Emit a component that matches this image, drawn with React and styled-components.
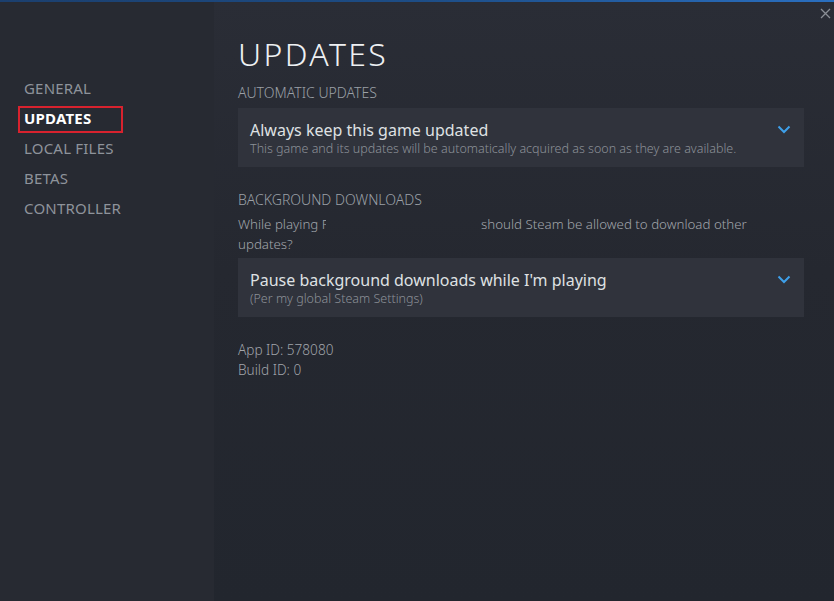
import React from "react";
import styled, { createGlobalStyle } from "styled-components";

const Global = createGlobalStyle`
  html, body { margin: 0; padding: 0; width: 834px; height: 601px; overflow: hidden; background: #23262e; }
  * { box-sizing: border-box; }
  #root { width: 834px; height: 601px; }
`;

const mainBg = `
  background: linear-gradient(180deg, #2a2d36 0%, #252830 45%, #22262e 100%);
  background-attachment: fixed;
`;

const Window = styled.div`
  position: relative;
  width: 834px;
  height: 601px;
  display: flex;
  flex-direction: column;
  font-family: "Noto Sans", "Open Sans", sans-serif;
`;

const TopLine = styled.div`
  height: 2px;
  flex: none;
  background: linear-gradient(90deg, #1b3f6e 0%, #1d4d86 50%, #2a6fc0 100%);
`;

const Body = styled.div`
  flex: 1;
  display: flex;
`;

const Sidebar = styled.nav`
  width: 214px;
  flex: none;
  background: #272a32;
  padding: 71px 0 0 24px;
  display: flex;
  flex-direction: column;
`;

const NavItem = styled.div`
  height: 30px;
  display: flex;
  align-items: center;
  font-size: 15px;
  letter-spacing: 0.2px;
  text-transform: uppercase;
  color: ${(p) => (p.$active ? "#ffffff" : "#8e939b")};
  font-weight: ${(p) => (p.$active ? 700 : 400)};
  position: relative;
`;

const Highlight = styled.span`
  position: absolute;
  left: -6px;
  top: 3px;
  width: 105px;
  height: 27px;
  border: 2px solid #d8222e;
`;

const Main = styled.main`
  flex: 1;
  ${mainBg}
  padding: 32px 30px 0 24px;
  display: flex;
  flex-direction: column;
`;

const Title = styled.h1`
  margin: 0;
  font-weight: 300;
  font-size: 32px;
  letter-spacing: 2.4px;
  line-height: 40px;
  color: #eef0f2;
`;

const SectionLabel = styled.div`
  font-size: 14px;
  font-weight: 300;
  color: #9ba0a7;
  text-transform: uppercase;
  line-height: 20px;
  margin-top: ${(p) => p.$mt || 0}px;
`;

const Description = styled.div`
  font-size: 13.3px;
  font-weight: 300;
  color: #a1a5ab;
  line-height: 20px;
  margin-top: 4px;
  width: 540px;
`;

const Redact = styled.span`
  display: inline-block;
  position: relative;
  width: 152px;
  height: 20px;
  margin-left: -4px;
  vertical-align: bottom;
  ${mainBg}
`;

const Dropdown = styled.div`
  margin-top: ${(p) => p.$mt || 0}px;
  width: 566px;
  height: 59px;
  background: #30333c;
  padding: 11px 12px 0 12px;
  display: flex;
  justify-content: space-between;
  align-items: flex-start;
`;

const DropText = styled.div`
  display: flex;
  flex-direction: column;
`;

const DropTitle = styled.div`
  font-size: 16px;
  color: #dfe1e3;
  line-height: 22px;
`;

const DropSub = styled.div`
  font-size: 12.5px;
  font-weight: 300;
  color: #8c9198;
  line-height: 15px;
`;

const Chevron = styled.svg`
  margin-top: 6px;
  margin-right: 1px;
  flex: none;
`;

const Info = styled.div`
  margin-top: 23px;
  font-size: 13.6px;
  font-weight: 300;
  color: #a1a5ab;
  line-height: 20px;
`;

const Close = styled.svg`
  position: absolute;
  right: 3px;
  top: 8px;
`;

const ChevronIcon = () => (
  <Chevron width="14" height="9" viewBox="0 0 14 9">
    <path d="M1.5 1.5 L7 7 L12.5 1.5" fill="none" stroke="#3ea0ea" strokeWidth="2" />
  </Chevron>
);

export default function App() {
  const nav = ["General", "Updates", "Local Files", "Betas", "Controller"];
  return (
    <>
      <Global />
      <Window>
        <TopLine />
        <Body>
          <Sidebar>
            {nav.map((n) => (
              <NavItem key={n} $active={n === "Updates"}>
                {n}
                {n === "Updates" && <Highlight />}
              </NavItem>
            ))}
          </Sidebar>
          <Main>
            <Title>UPDATES</Title>
            <SectionLabel $mt={9}>Automatic Updates</SectionLabel>
            <Dropdown $mt={5}>
              <DropText>
                <DropTitle>Always keep this game updated</DropTitle>
                <DropSub>This game and its updates will be automatically acquired as soon as they are available.</DropSub>
              </DropText>
              <ChevronIcon />
            </Dropdown>
            <SectionLabel $mt={23}>Background Downloads</SectionLabel>
            <Description>
              While playing P<Redact /> should Steam be allowed to download other updates?
            </Description>
            <Dropdown $mt={4}>
              <DropText>
                <DropTitle>Pause background downloads while I'm playing</DropTitle>
                <DropSub>(Per my global Steam Settings)</DropSub>
              </DropText>
              <ChevronIcon />
            </Dropdown>
            <Info>
              App ID: 578080
              <br />
              Build ID: 0
            </Info>
          </Main>
        </Body>
        <Close width="11" height="11" viewBox="0 0 11 11">
          <path d="M1 1 L10 10 M10 1 L1 10" stroke="#8a8e95" strokeWidth="1.3" />
        </Close>
      </Window>
    </>
  );
}
